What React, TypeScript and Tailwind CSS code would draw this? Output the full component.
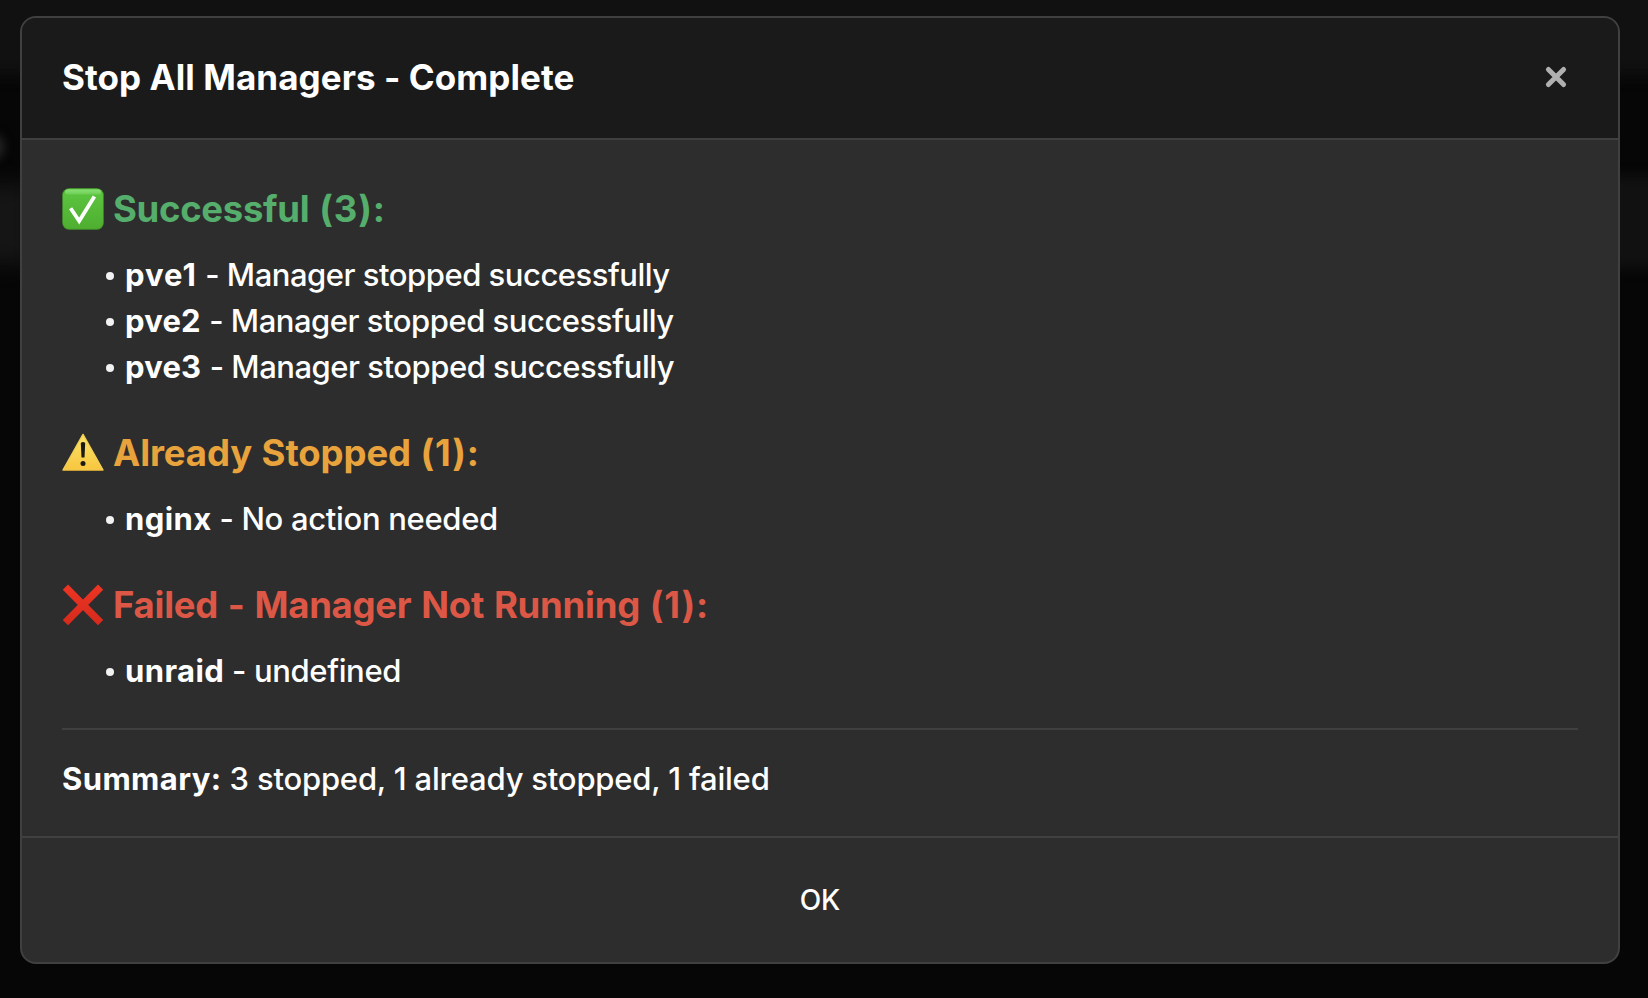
import type { ReactNode } from "react";

function CheckIcon() {
  return (
    <svg viewBox="0 0 42 42" className="h-[42px] w-[42px] shrink-0">
      <defs>
        <linearGradient id="check-fill" x1="0" y1="0" x2="0" y2="1">
          <stop offset="0" stopColor="#5cc640" />
          <stop offset="1" stopColor="#4fae30" />
        </linearGradient>
        <linearGradient id="check-gloss" x1="0" y1="0" x2="0" y2="1">
          <stop offset="0" stopColor="#8be077" />
          <stop offset="1" stopColor="#8be077" stopOpacity="0.35" />
        </linearGradient>
      </defs>
      <rect x="0.2" y="0.2" width="41.6" height="41.6" rx="7" fill="#43962a" />
      <rect x="1" y="0.8" width="40" height="40" rx="6.4" fill="url(#check-fill)" />
      <rect x="3" y="1.6" width="36" height="5" rx="2.5" fill="url(#check-gloss)" />
      <path d="M8.6 20.2 17.2 33 32.4 8.4" fill="none" stroke="#fff" strokeWidth="3.8" strokeLinejoin="miter" />
    </svg>
  );
}

function WarningIcon() {
  return (
    <svg viewBox="0 0 42 42" className="h-[42px] w-[42px] shrink-0">
      <defs>
        <linearGradient id="warn-fill" x1="0" y1="0" x2="0" y2="1">
          <stop offset="0" stopColor="#fbe469" />
          <stop offset="1" stopColor="#f7c63f" />
        </linearGradient>
      </defs>
      <path d="M21 2.4 41 38H1Z" fill="url(#warn-fill)" stroke="#f3cf55" strokeWidth="1.4" strokeLinejoin="round" />
      <path d="M1.2 38.4h39.6" stroke="#c99a2e" strokeWidth="0.8" />
      <path d="M18.8 11q2.2-2 4.4 0L22.5 25.6h-3Z" fill="#1c1a10" />
      <circle cx="21" cy="31.6" r="2.5" fill="#1c1a10" />
    </svg>
  );
}

function CrossIcon() {
  return (
    <svg viewBox="0 0 42 42" className="h-[42px] w-[42px] shrink-0">
      <defs>
        <linearGradient id="cross-fill" x1="0" y1="0" x2="0" y2="42" gradientUnits="userSpaceOnUse">
          <stop offset="0" stopColor="#ee3524" />
          <stop offset="1" stopColor="#d42a1c" />
        </linearGradient>
      </defs>
      <path d="M3.4 3.2 38.6 38.6M38.6 3.2 3.4 38.6" stroke="url(#cross-fill)" strokeWidth="7.4" />
    </svg>
  );
}

function Heading({ icon, label, count, className }: { icon: ReactNode; label: string; count: number; className: string }) {
  return (
    <h4 className={`flex h-[46px] items-center gap-[9px] text-[36.5px] leading-[46px] font-bold ${className}`}>
      {icon}
      <span>
        {label} <span className="tracking-[0.8px]">({count}):</span>
      </span>
    </h4>
  );
}

function Row({ name, text, nameClass = "tracking-[0.4px]", textClass }: { name: string; text: string; nameClass?: string; textClass: string }) {
  return (
    <li className="flex h-[46px] items-center whitespace-pre">
      <span className="mt-px mr-[11px] h-2 w-2 rounded-full bg-[#f2f2f2]" />
      <strong className={`font-bold ${nameClass}`}>{name}</strong>
      <span className={textClass}> - {text}</span>
    </li>
  );
}

export default function App() {
  return (
    <div className="relative h-[998px] w-[1648px] overflow-hidden bg-[#060606] font-['Inter',sans-serif] text-white">
      <div className="absolute -top-6 -left-6 h-[98px] w-[1700px] bg-[#111111] blur-[8px]" />
      <div className="absolute top-[176px] right-[-20px] h-[92px] w-[60px] bg-[#111111] blur-[6px]" />
      <div className="absolute top-[184px] -left-8 h-[80px] w-16 bg-[#151515] blur-[10px]" />
      <div className="absolute top-[134px] -left-5 h-[26px] w-6 rounded-full bg-[#242424] blur-[5px]" />

      <div className="relative mt-4 ml-5 flex h-[948px] w-[1600px] flex-col overflow-hidden rounded-2xl border-2 border-[#404040] bg-[#2d2d2d]">
        <header className="flex h-[122px] items-center justify-between border-b-2 border-[#404040] bg-[#1a1a1a] pr-[46px] pb-0.5 pl-10">
          <h3 className="text-[35px] leading-[44px] font-bold tracking-[0.07px]">Stop All Managers - Complete</h3>
          <button aria-label="Close" className="flex h-8 w-8 items-center justify-center">
            <svg viewBox="0 0 24 24" className="h-6 w-6" fill="none" stroke="#b0b0b0" strokeWidth="5" strokeLinecap="round">
              <path d="M4.4 4.4 19.6 19.6M19.6 4.4 4.4 19.6" />
            </svg>
          </button>
        </header>

        <main className="h-[696px] px-10 pt-[46px] text-[31px] font-[450]">
          <Heading icon={<CheckIcon />} label="Successful" count={3} className="tracking-[-0.3px] [word-spacing:1.5px] text-[#55ae6b]" />
          <ul className="mt-5 pl-[44px]">
            <Row name="pve1" text="Manager stopped successfully" nameClass="tracking-[1px]" textClass="ml-[0.6px] tracking-[-0.48px]" />
            <Row name="pve2" text="Manager stopped successfully" nameClass="tracking-[0.2px]" textClass="ml-[0.6px] tracking-[-0.48px]" />
            <Row name="pve3" text="Manager stopped successfully" nameClass="tracking-[0.2px]" textClass="ml-[0.6px] tracking-[-0.48px]" />
          </ul>
          <Heading icon={<WarningIcon />} label="Already Stopped" count={1} className="mt-10 tracking-[-0.1px] [word-spacing:1px] text-[#e8a33d]" />
          <ul className="mt-5 pl-[44px]">
            <Row name="nginx" text="No action needed" textClass="tracking-[-0.32px]" />
          </ul>
          <Heading icon={<CrossIcon />} label="Failed - Manager Not Running" count={1} className="mt-10 tracking-[-0.25px] [word-spacing:1.4px] text-[#dc5745]" />
          <ul className="mt-5 pl-[44px]">
            <Row name="unraid" text="undefined" textClass="tracking-[-0.36px]" />
          </ul>
          <div className="mt-[34px] border-t-2 border-[#404040] pt-[26px] leading-[46px]">
            <strong className="font-bold tracking-[0.4px]">Summary:</strong>
            <span className="tracking-[-0.2px]"> 3 stopped, 1 already stopped, 1 failed</span>
          </div>
        </main>

        <footer className="flex flex-1 items-center justify-center border-t-2 border-[#404040]">
          <button className="text-[28px] leading-9 font-[450]">OK</button>
        </footer>
      </div>
    </div>
  );
}
